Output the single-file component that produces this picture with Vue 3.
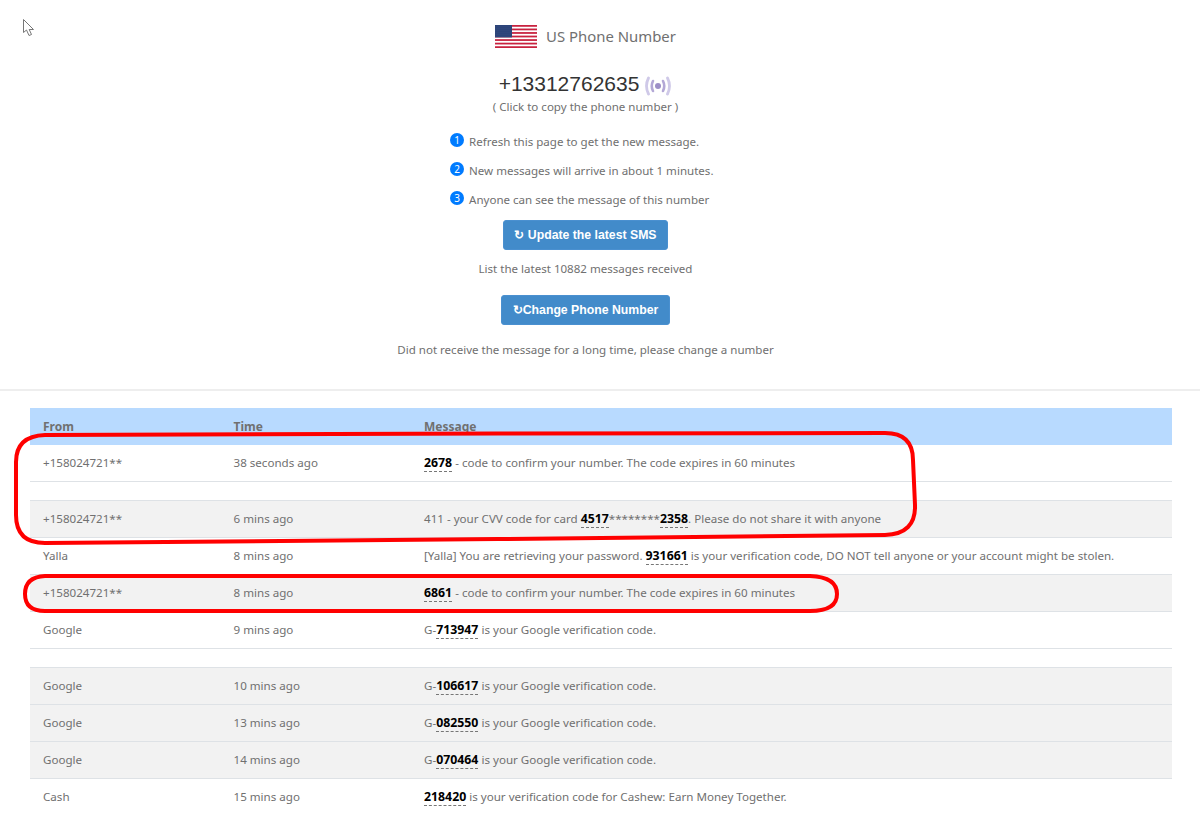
<script setup>
const tips = [
  'Refresh this page to get the new message.',
  'New messages will arrive in about 1 minutes.',
  'Anyone can see the message of this number',
]
const stripes = [0, 1, 2, 3, 4, 5, 6]
const rows = [
  { from: '+158024721**', time: '38 seconds ago', parts: [['b', '2678'], ['t', ' - code to confirm your number. The code expires in 60 minutes']] },
  { spacer: true },
  { from: '+158024721**', time: '6 mins ago', alt: true, parts: [['t', '411 - your CVV code for card '], ['b', '4517'], ['t', '********'], ['b', '2358'], ['t', '. Please do not share it with anyone']] },
  { from: 'Yalla', time: '8 mins ago', parts: [['t', '[Yalla] You are retrieving your password. '], ['b', '931661'], ['t', ' is your verification code, DO NOT tell anyone or your account might be stolen.']] },
  { from: '+158024721**', time: '8 mins ago', alt: true, parts: [['b', '6861'], ['t', ' - code to confirm your number. The code expires in 60 minutes']] },
  { from: 'Google', time: '9 mins ago', parts: [['t', 'G-'], ['b', '713947'], ['t', ' is your Google verification code.']] },
  { spacer: true },
  { from: 'Google', time: '10 mins ago', alt: true, parts: [['t', 'G-'], ['b', '106617'], ['t', ' is your Google verification code.']] },
  { from: 'Google', time: '13 mins ago', alt: true, parts: [['t', 'G-'], ['b', '082550'], ['t', ' is your Google verification code.']] },
  { from: 'Google', time: '14 mins ago', alt: true, parts: [['t', 'G-'], ['b', '070464'], ['t', ' is your Google verification code.']] },
  { from: 'Cash', time: '15 mins ago', parts: [['b', '218420'], ['t', ' is your verification code for Cashew: Earn Money Together.']] },
]
</script>

<template>
  <div class="page">
    <svg class="cursor" width="14" height="20" viewBox="0 0 14 20">
      <path d="M1.5 1.5V14.5L4.5 12L7 17.5L9.5 16.5L7.2 11.5H11.5Z" fill="#fff" stroke="#777" stroke-width="1" />
    </svg>

    <header class="top">
      <div class="title">
        <svg class="flag" width="42" height="23" viewBox="0 0 42 23">
          <defs>
            <pattern id="stars" width="2" height="2" patternUnits="userSpaceOnUse">
              <circle cx="1" cy="1" r="0.45" fill="#8b9cc4" />
            </pattern>
          </defs>
          <rect width="42" height="23" fill="#fff" />
          <rect v-for="i in stripes" :key="i" x="0" :y="i * 3.54" width="42" height="1.77" fill="#c8223f" />
          <rect width="17" height="12.400" fill="#20386f" />
          <rect width="17" height="12.400" fill="url(#stars)" />
        </svg>
        <span>US Phone Number</span>
      </div>
      <div class="number">
        <span>+13312762635</span>
        <svg class="signal" width="28" height="20" viewBox="0 0 28 20" fill="none">
          <circle cx="14" cy="10" r="3" fill="#9d8fc7" />
          <path d="M9 5Q6.500 10 9 15M19 5Q21.500 10 19 15" stroke="#b3a8d6" stroke-width="2.600" stroke-linecap="round" />
          <path d="M4.500 2Q0.500 10 4.500 18M23.500 2Q27.500 10 23.500 18" stroke="#cfc9e8" stroke-width="2.800" stroke-linecap="round" />
        </svg>
      </div>
      <p class="hint">( Click to copy the phone number )</p>
      <ul class="tips">
        <li v-for="(tip, i) in tips" :key="i">
          <span class="dot">{{ i + 1 }}</span>
          <span>{{ tip }}</span>
        </li>
      </ul>
      <button class="btn update">↻ Update the latest SMS</button>
      <p class="count">List the latest 10882 messages received</p>
      <button class="btn change">↻Change Phone Number</button>
      <p class="note">Did not receive the message for a long time, please change a number</p>
    </header>

    <div class="rule"></div>

    <section class="table">
      <div class="row head">
        <div class="c1">From</div>
        <div class="c2">Time</div>
        <div class="c3">Message</div>
      </div>
      <template v-for="(r, i) in rows" :key="i">
        <div v-if="r.spacer" class="spacer"></div>
        <div v-else class="row" :class="{ alt: r.alt }">
          <div class="c1">{{ r.from }}</div>
          <div class="c2">{{ r.time }}</div>
          <div class="c3"><template v-for="(p, j) in r.parts" :key="j"><b v-if="p[0] === 'b'">{{ p[1] }}</b><template v-else>{{ p[1] }}</template></template></div>
        </div>
      </template>
    </section>

    <svg class="marks" width="1200" height="814" viewBox="0 0 1200 814" fill="none">
      <path d="M45 435Q16 436 16 462V515Q16 543 45 543C300 541 620 538 885 535Q916 534 915 505L913 460Q913 433 885 433C620 433 300 434 45 435Z" stroke="#f00" stroke-width="4" />
      <path d="M45 576Q25 577 25 594Q25 611 45 611H810Q837 611 837 594Q837 577 810 576Z" stroke="#f00" stroke-width="4" />
    </svg>
  </div>
</template>

<style scoped>
.page {
  position: relative;
  height: 814px;
  overflow: hidden;
  background: #fff;
  color: #707070;
  font-family: "Noto Sans", "Open Sans", sans-serif;
  font-size: 11.600px;
}
.cursor {
  position: absolute;
  left: 22px;
  top: 18px;
}
.marks {
  position: absolute;
  left: 0;
  top: 0;
  pointer-events: none;
}
.top {
  display: flex;
  flex-direction: column;
  align-items: center;
  width: 1171px;
  height: 389px;
  padding-top: 25px;
  box-sizing: border-box;
  font-size: 11.550px;
}
.title {
  display: flex;
  align-items: center;
  gap: 9px;
  height: 23px;
  font-size: 14.900px;
  line-height: 21px;
}
.number {
  display: flex;
  align-items: center;
  gap: 5px;
  margin-top: 13px;
  height: 46px;
  color: #333;
  font-family: "Liberation Sans", sans-serif;
  font-size: 21px;
}
.signal {
  margin-top: 4px;
}
.hint {
  margin: -9px 0 0;
  line-height: 17px;
}
.tips {
  list-style: none;
  margin: 17px 0 0;
  padding: 0;
  width: 271px;
}
.tips li {
  display: flex;
  align-items: flex-start;
  gap: 5px;
  height: 29px;
  line-height: 17px;
  padding-top: 1px;
  box-sizing: border-box;
  white-space: nowrap;
}
.dot {
  flex: none;
  width: 14px;
  height: 14px;
  border-radius: 50%;
  background: #007bff;
  color: #fff;
  font-size: 10px;
  line-height: 14px;
  text-align: center;
}
.btn {
  display: block;
  height: 30px;
  padding: 0;
  border: 1px solid #4a90d0;
  border-radius: 3px;
  background: #428bca;
  color: #fff;
  font-family: "Liberation Sans", sans-serif;
  font-size: 12.250px;
  font-weight: 700;
}
.update {
  width: 165px;
  margin-top: 1px;
}
.change {
  width: 169px;
  margin-top: 18px;
}
.count {
  margin: 10px 0 0;
  line-height: 17px;
}
.note {
  margin: 16px 0 0;
  line-height: 17px;
}
.rule {
  height: 2px;
  background: #eee;
}
.table {
  margin: 17px 28px 0 30px;
}
.row {
  display: flex;
  align-items: center;
  height: 37px;
  padding-bottom: 1px;
  box-sizing: border-box;
  border-bottom: 1px solid #dee2e6;
  line-height: 17px;
}
.row.alt {
  background: #f2f2f2;
}
.head {
  align-items: flex-end;
  background: #b8daff;
  border-bottom: 0;
  padding-bottom: 10px;
  font-size: 12px;
  font-weight: 700;
}
.spacer {
  height: 19px;
  box-sizing: border-box;
  border-bottom: 1px solid #dee2e6;
}
.c1 {
  width: 190.500px;
  padding-left: 13px;
  box-sizing: border-box;
}
.c2 {
  width: 190.500px;
  padding-left: 13px;
  box-sizing: border-box;
}
.c3 {
  padding-left: 13px;
  white-space: pre-wrap;
}
b {
  color: #000;
  font-size: 12.300px;
  font-weight: 700;
  border-bottom: 1px dashed #777;
}
</style>

<style>
html, body {
  margin: 0;
  overflow: hidden;
}
</style>
